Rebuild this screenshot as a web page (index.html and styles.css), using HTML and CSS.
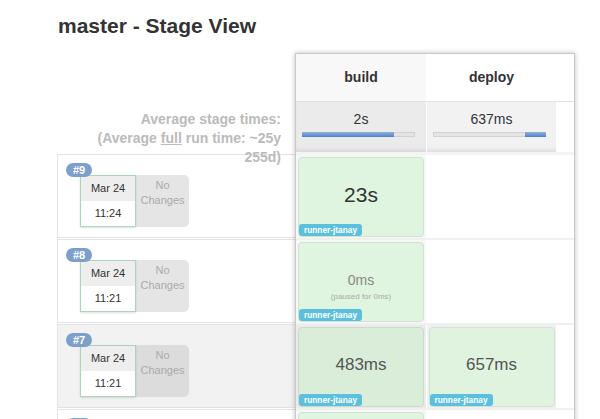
FILE: index.html
```html
<!DOCTYPE html>
<html lang="en">
<head>
<meta charset="utf-8">
<title>master - Stage View</title>
<link rel="stylesheet" href="styles.css">
</head>
<body>
<div class="page">
  <h1 class="title">master - Stage View</h1>
  <div class="stage-view">
    <div class="builds">
      <div class="builds-head"></div>
      <div class="avg-label">Average stage times:<br>(Average <u>full</u> run time: ~25y<br>255d)</div>

      <div class="build-row">
        <span class="build-num">#9</span>
        <div class="build-info">
          <div class="date"><div class="day">Mar 24</div><div class="time">11:24</div></div>
          <div class="changes">No<br>Changes</div>
        </div>
      </div>

      <div class="build-row">
        <span class="build-num">#8</span>
        <div class="build-info">
          <div class="date"><div class="day">Mar 24</div><div class="time">11:21</div></div>
          <div class="changes">No<br>Changes</div>
        </div>
      </div>

      <div class="build-row hover">
        <span class="build-num">#7</span>
        <div class="build-info">
          <div class="date"><div class="day">Mar 24</div><div class="time">11:21</div></div>
          <div class="changes">No<br>Changes</div>
        </div>
      </div>

      <div class="build-row">
        <span class="build-num">#6</span>
        <div class="build-info">
          <div class="date"><div class="day">Mar 24</div><div class="time">11:19</div></div>
          <div class="changes">No<br>Changes</div>
        </div>
      </div>
    </div>

    <div class="table-box">
      <div class="trow head">
        <div class="col">build</div>
        <div class="col">deploy</div>
      </div>
      <div class="trow avg">
        <div class="col">2s<div class="bar"><div class="bar-fill" style="margin-left:0;width:81%"></div></div></div>
        <div class="col">637ms<div class="bar"><div class="bar-fill" style="margin-left:81%;width:19%"></div></div></div>
      </div>

      <div class="trow srow">
        <div class="col"><div class="cell"><div class="dur">23s</div><span class="runner">runner-jtanay</span></div></div>
        <div class="col"></div>
      </div>

      <div class="trow srow">
        <div class="col"><div class="cell"><div class="dur sm">0ms</div><div class="paused">(paused for 0ms)</div><span class="runner">runner-jtanay</span></div></div>
        <div class="col"></div>
      </div>

      <div class="trow srow hover">
        <div class="col"><div class="cell"><div class="dur md">483ms</div><span class="runner">runner-jtanay</span></div></div>
        <div class="col"><div class="cell"><div class="dur md">657ms</div><span class="runner">runner-jtanay</span></div></div>
      </div>

      <div class="trow srow">
        <div class="col"><div class="cell"><div class="dur md">512ms</div><span class="runner">runner-jtanay</span></div></div>
        <div class="col"></div>
      </div>
    </div>
  </div>
</div>
</body>
</html>
```

FILE: styles.css
```css
* { box-sizing: border-box; }
html, body { margin: 0; padding: 0; }
body {
  font-family: "Liberation Sans", Arial, Helvetica, sans-serif;
  color: #333;
  background: #fff;
  overflow: hidden;
}
.page { padding: 14px 0 0 57px; }
.title {
  margin: 0 0 15px 1px;
  font-size: 21px;
  line-height: 24px;
  font-weight: bold;
  color: #333;
}
.stage-view { display: flex; align-items: flex-start; }

/* left: builds */
.builds { width: 238px; flex: none; }
.builds-head { height: 49px; }
.avg-label {
  height: 52px;
  padding: 8px 14px 0 0;
  text-align: right;
  font-size: 14px;
  line-height: 19px;
  font-weight: bold;
  color: #bbb;
  white-space: nowrap;
}
.avg-label u { text-decoration: underline; }
.build-row {
  height: 84px;
  margin-bottom: 1px;
  border: 1px solid #e3e3e3;
  border-right: none;
  padding: 8px 0 0 8px;
  background: #fff;
}
.build-row.hover { background: #f2f2f2; }
.build-num {
  position: relative;
  z-index: 2;
  display: block;
  width: 26px;
  height: 14px;
  border-radius: 7px;
  background: #7c9fcb;
  color: #fff;
  font-size: 11px;
  font-weight: bold;
  line-height: 14px;
  text-align: center;
}
.build-info { display: flex; margin: -2px 0 0 14px; }
.date {
  position: relative;
  z-index: 1;
  width: 56px;
  height: 52px;
  border: 1px solid #a9d6b9;
  background: #fff;
  box-shadow: 0 1px 2px rgba(0,0,0,0.12);
  display: flex;
  flex-direction: column;
  font-size: 11px;
  color: #333;
}
.day { height: 25px; line-height: 25px; background: #eee; text-align: center; }
.time { flex: 1; line-height: 25px; text-align: center; background: #fff; }
.changes {
  width: 53px;
  height: 52px;
  background: #e5e5e5;
  border-radius: 0 5px 5px 0;
  color: #aaa;
  font-size: 11px;
  line-height: 15px;
  text-align: center;
  padding-top: 3px;
}
.hover .changes { background: #dcdcdc; }

/* right: stage table */
.table-box {
  width: 280px;
  flex: none;
  border: 1px solid #c8c8c8;
  border-bottom: none;
  background: #fff;
  box-shadow: 0 0 5px rgba(0,0,0,0.25);
}
.trow { display: flex; }
.col { width: 130px; flex: none; }
.col + .col { border-left: 1px solid #fff; }

.head { border-bottom: 1px solid #e0e0e0; }
.head .col {
  height: 47px;
  line-height: 47px;
  text-align: center;
  font-size: 14px;
  font-weight: bold;
  background: #fff;
}
.head .col:first-child { background: #f8f8f8; }

.avg { border-bottom: 3px solid #f4f4f4; }
.avg .col {
  height: 50px;
  padding-top: 8px;
  background: #f2f2f2;
  box-shadow: inset 0 -4px 4px -2px rgba(0,0,0,0.09);
  text-align: center;
  font-size: 14px;
  line-height: 18px;
  color: #333;
}
.avg .col:first-child { background: #ebebeb; }
.bar {
  display: flex;
  margin: 4px 0 0 6px;
  width: 113px;
  height: 5px;
  background: #e4e4e4;
  box-shadow: inset 0 0 0 1px #d2d2d2;
}
.bar-fill { height: 100%; background: linear-gradient(#8fb2df, #4f80c6); }

.srow { height: 85px; border-bottom: 2px solid #f0f0f0; }
.srow .col { height: 83px; padding-top: 2px; background: #fff; }
.srow .col:first-child { background: #f7f7f7; }
.srow.hover .col { background: #f0f0f0; }
.srow.hover .col:first-child { background: #ebebeb; }

.cell {
  position: relative;
  width: 126px;
  height: 80px;
  margin: 0 auto;
  border: 1px solid #cfe3cf;
  border-radius: 4px;
  background: #dff5df;
  display: flex;
  flex-direction: column;
  align-items: center;
  justify-content: center;
  padding-bottom: 4px;
}
.srow.hover .col:first-child .cell { background: #d9edd9; border-color: #c9dbc9; }
.srow.hover .cell { background: #dff3df; }
.dur { font-size: 21px; line-height: 24px; color: #333; }
.dur.md { font-size: 17px; line-height: 22px; color: #555; }
.dur.sm { font-size: 14px; line-height: 18px; color: #888; }
.paused {
  font-size: 8px;
  line-height: 12px;
  color: #aaa;
  margin-top: 2px;
  margin-bottom: -14px;
}
.runner {
  position: absolute;
  left: 0;
  bottom: 0;
  height: 12px;
  padding: 0 5px;
  border-radius: 3px;
  background: #5bc0de;
  color: #fff;
  font-size: 8.3px;
  font-weight: bold;
  line-height: 12px;
  white-space: nowrap;
}
```
